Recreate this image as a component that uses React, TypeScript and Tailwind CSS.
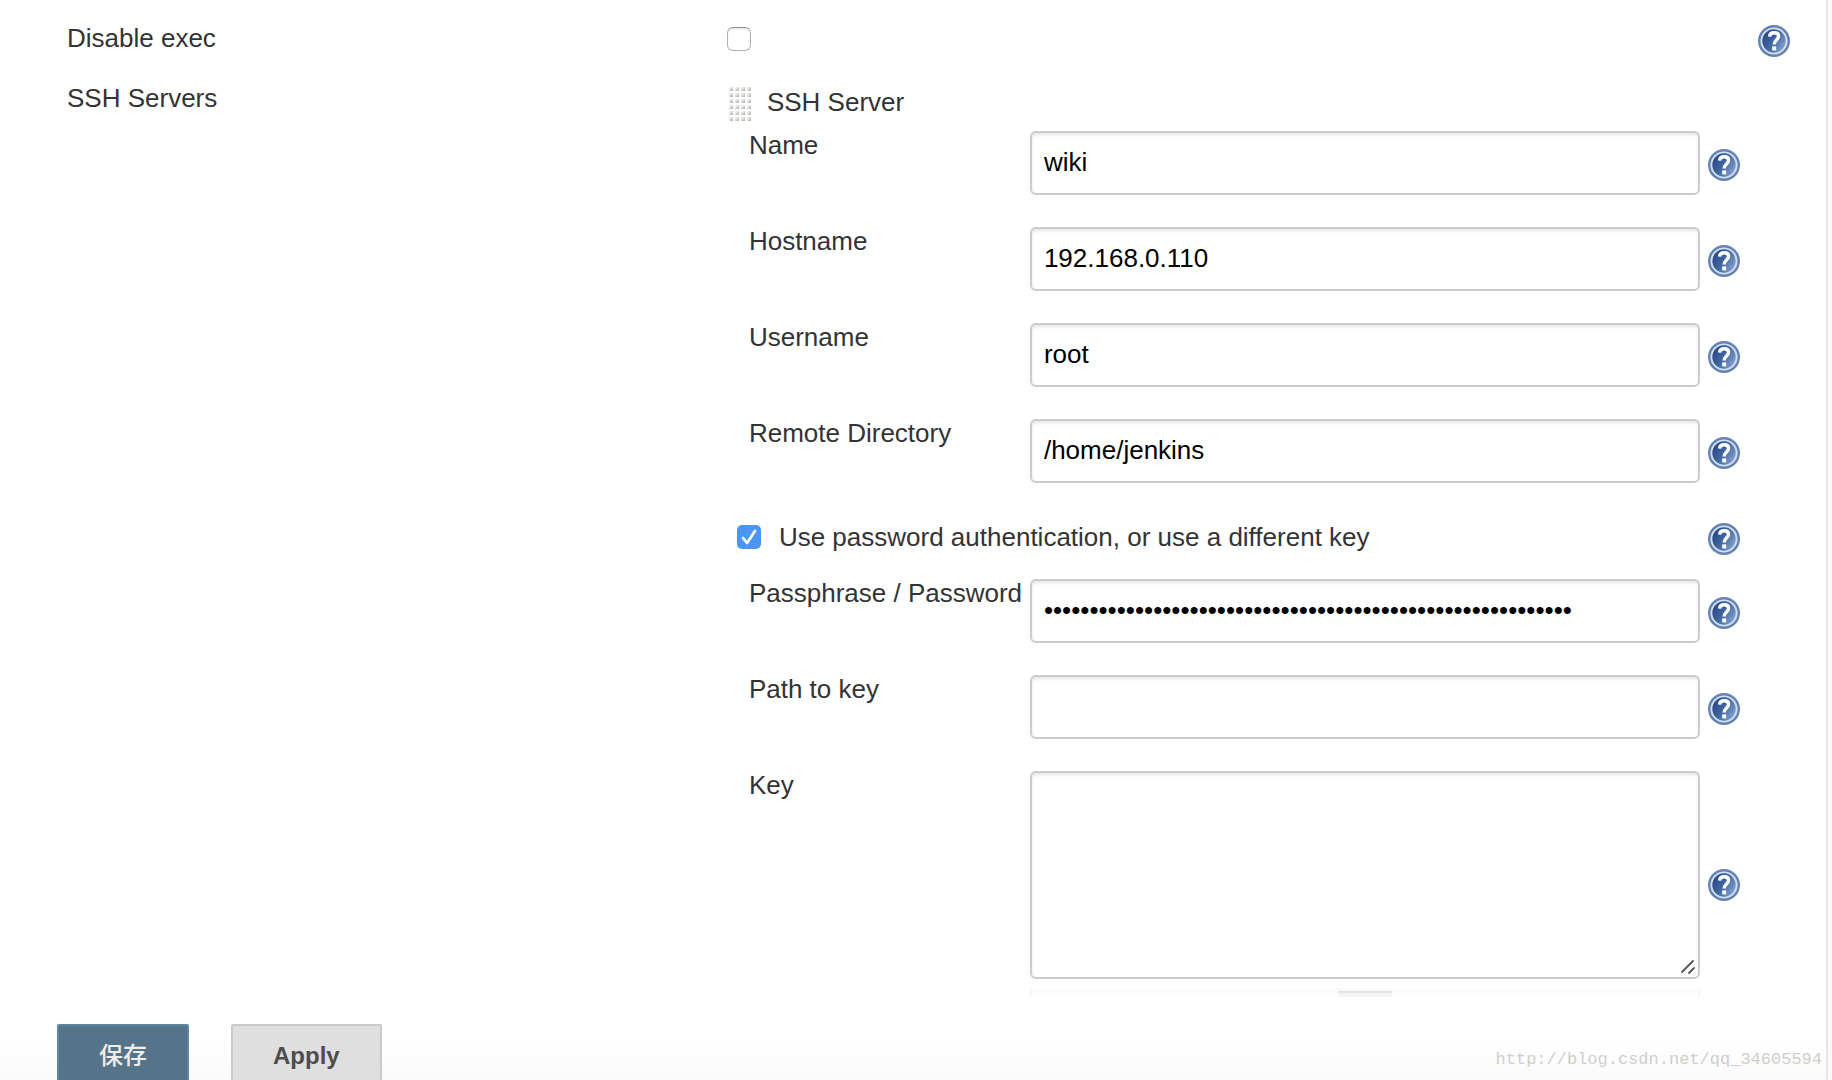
import { useId, type ReactNode } from "react";

const serverFields = [
  { label: "Name", value: "wiki" },
  { label: "Hostname", value: "192.168.0.110" },
  { label: "Username", value: "root" },
  { label: "Remote Directory", value: "/home/jenkins" },
];

const fieldBox =
  "block w-full rounded-md border-2 border-[#cbcbcb] bg-white px-3 text-black shadow-[inset_0_2px_3px_rgba(0,0,0,0.1)] outline-none";

function HelpButton({ topic }: { topic: string }) {
  const gradient = useId();
  return (
    <button type="button" aria-label={`Help for ${topic}`} className="block h-8 w-8 shrink-0">
      <svg viewBox="0 0 32 32" className="h-8 w-8">
        <defs>
          <linearGradient id={gradient} x1="0" y1="0.2" x2="1" y2="0.8">
            <stop offset="0.1" stopColor="#264a89" />
            <stop offset="0.5" stopColor="#4468a2" />
            <stop offset="1" stopColor="#8fabd3" />
          </linearGradient>
        </defs>
        <circle cx="16" cy="16" r="16" fill="#6482b0" />
        <circle cx="16" cy="16" r="12.6" fill={`url(#${gradient})`} stroke="#d3deee" strokeWidth="1.9" />
        <path
          d="M11.6 11.6C11.8 8.600 13.800 7.800 16.200 7.800c2.900 0 4.400 1.300 4.400 3.500 0 3.400-4.400 3.700-4.400 8.200"
          fill="none"
          stroke="#fff"
          strokeWidth="3.400"
        />
        <rect x="14.200" y="21.400" width="4" height="4" fill="#fff" />
      </svg>
    </button>
  );
}

function DragHandle() {
  const shade = useId();
  const rows = [0, 1, 2, 3, 4, 5];
  const cols = [0, 1, 2, 3];
  return (
    <svg viewBox="0 0 24 36" className="h-9 w-6 shrink-0" aria-hidden="true">
      <defs>
        <linearGradient id={shade} x1="0" y1="0" x2="1" y2="1">
          <stop offset="0.2" stopColor="#f4f4f2" />
          <stop offset="1" stopColor="#a9a9a4" />
        </linearGradient>
      </defs>
      {rows.map((r) =>
        cols.map((c) => (
          <rect key={`${r}-${c}`} x={2 + c * 6} y={1 + r * 6} width="4" height="4" fill={`url(#${shade})`} />
        )),
      )}
    </svg>
  );
}

function FieldRow({ label, id, tall = false, children }: { label: string; id: string; tall?: boolean; children: ReactNode }) {
  return (
    <div className="flex items-start">
      <label htmlFor={id} className="w-[281px] shrink-0 whitespace-nowrap leading-7">
        {label}
      </label>
      <div className="flex min-w-0 flex-1 items-center gap-2">
        <div className="min-w-0 flex-1">{children}</div>
        <div className={tall ? "pt-5" : "pt-1"}>
          <HelpButton topic={label} />
        </div>
      </div>
    </div>
  );
}

function TextField({ label, value = "", type = "text" }: { label: string; value?: string; type?: string }) {
  const id = useId();
  return (
    <FieldRow label={label} id={id}>
      <input id={id} type={type} defaultValue={value} className={`${fieldBox} h-16 pb-[2px]`} />
    </FieldRow>
  );
}

function ServerPanel() {
  return (
    <section className="min-w-0 flex-1">
      <div className="flex items-start gap-4 pt-1">
        <DragHandle />
        <h2 className="leading-8">SSH Server</h2>
      </div>
      <div className="mt-[9px] space-y-8 pl-[22px] pr-[50px]">
        {serverFields.map((f) => (
          <TextField key={f.label} label={f.label} value={f.value} />
        ))}
      </div>
      <div className="mt-10 flex items-start justify-between pl-[10px] pr-[50px]">
        <label className="flex items-center gap-[18px] leading-7">
          <input type="checkbox" defaultChecked className="peer sr-only" />
          <span className="flex h-6 w-6 items-center justify-center rounded-[5px] bg-[#4b96f5]">
            <svg viewBox="0 0 24 24" className="h-6 w-6" aria-hidden="true">
              <path d="M6 13l4 5 8-12" fill="none" stroke="#fff" strokeWidth="2.800" strokeLinecap="round" strokeLinejoin="round" />
            </svg>
          </span>
          Use password authentication, or use a different key
        </label>
        <HelpButton topic="password authentication" />
      </div>
      <div className="mt-6 space-y-8 pl-[22px] pr-[50px]">
        <TextField label="Passphrase / Password" type="password" value={"x".repeat(58)} />
        <TextField label="Path to key" />
        <FieldRow label="Key" id="key" tall>
          <div className="relative">
            <textarea id="key" className={`${fieldBox} h-52 resize-none py-2`} />
            <svg viewBox="0 0 16 16" className="pointer-events-none absolute bottom-1 right-1 h-4 w-4" aria-hidden="true">
              <path d="M2 13L13 2M9 14l5-5" stroke="#555" strokeWidth="1.800" strokeLinecap="round" />
            </svg>
          </div>
        </FieldRow>
      </div>
      {/* top edge of the next block, fading out under the button bar */}
      <div className="mt-[10px] pl-[303px] pr-[90px]">
        <div className="flex h-2 items-end justify-center border-x border-[#eeeeee] bg-linear-to-b from-[#f9f9f9] to-white">
          <div className="h-[6px] w-[54px] border-t-2 border-[#e4e4e4] bg-[#f5f5f5]" />
        </div>
      </div>
    </section>
  );
}

export default function App() {
  return (
    <div className="flex h-screen overflow-hidden bg-[#fafafa] pr-1 font-['Liberation_Sans',Arial,'Noto_Sans_CJK_SC',sans-serif] text-[26px] text-[#333333]">
      <div className="relative min-w-0 flex-1 border-r-2 border-[#e5e5e5] bg-white">
        <main className="pl-[67px] pr-9 pt-[23px]">
          <div className="flex items-start">
            <label htmlFor="disable-exec" className="w-[38.3%] shrink-0 leading-[30px]">
              Disable exec
            </label>
            <div className="flex flex-1 items-start justify-between">
              <input
                id="disable-exec"
                type="checkbox"
                className="mt-1 h-6 w-6 appearance-none rounded-md border border-[#b0b0b0] border-t-[#8c8c8c] bg-white shadow-[inset_0_2px_2px_rgba(0,0,0,0.08)]"
              />
              <div className="pt-[2px]">
                <HelpButton topic="Disable exec" />
              </div>
            </div>
          </div>
          <div className="mt-[25px] flex items-start">
            <div className="w-[38.3%] shrink-0 leading-8">SSH Servers</div>
            <ServerPanel />
          </div>
        </main>

        <footer className="absolute inset-x-0 bottom-0 flex h-14 items-start gap-[42px] overflow-hidden bg-linear-to-b from-white from-30% to-[#fafafa] pl-[57px]">
          <button
            type="button"
            className="h-16 shrink-0 rounded-[2px] border-2 border-[#5c879f] bg-[#557489] px-10 text-2xl font-medium text-[#eeeeee]"
          >
            保存
          </button>
          <button
            type="button"
            className="h-16 shrink-0 rounded-[2px] border-2 border-[#c9c9c9] bg-[#dfdfdf] px-10 text-2xl font-bold text-[#4d4d4d]"
          >
            Apply
          </button>
          <p className="absolute bottom-2 right-1 font-['Liberation_Mono',monospace] text-[17px] leading-6 text-[#cfcfca]">
            http://blog.csdn.net/qq_34605594
          </p>
        </footer>
      </div>
    </div>
  );
}
